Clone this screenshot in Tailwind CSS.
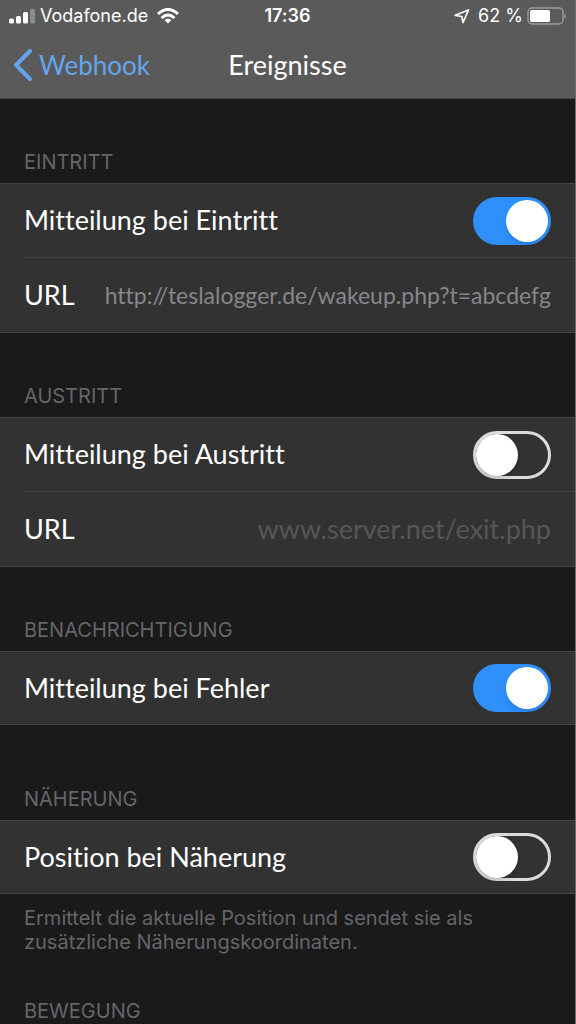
<!DOCTYPE html>
<html lang="de">
<head>
<meta charset="utf-8">
<meta name="viewport" content="width=device-width, initial-scale=1">
<title>Ereignisse</title>
<script src="https://cdn.jsdelivr.net/npm/@tailwindcss/browser@4"></script>
</head>
<body class="bg-[#1a1a1a] font-['Lato',sans-serif] text-white [font-variant-ligatures:none]">
<div class="flex h-screen flex-col overflow-hidden border-r border-[#6a6a6a]">
  <header class="shrink-0 border-b border-[#4a4a4a] bg-[#5a5a5a]">
    <div class="grid h-8 grid-cols-[1fr_auto_1fr] items-center px-2 font-['Inter',sans-serif] text-lg">
      <div class="flex items-center gap-2">
        <svg class="h-4 w-7" viewBox="0 0 28 16" fill="#fff" aria-hidden="true"><rect x="1" y="10.500" width="5" height="5" rx="1.500"/><rect x="8" y="8" width="5" height="7.500" rx="1.500"/><rect x="15" y="4" width="5" height="11.500" rx="1.500"/><rect x="22" y="1" width="5" height="14.500" rx="1.500" opacity=".3"/></svg>
        <span class="-ml-1">Vodafone.de</span>
        <svg class="h-4 w-6" viewBox="0 0 24 16" fill="none" stroke="#fff" stroke-width="3" aria-hidden="true"><path d="M2 6Q12-3 22 6"/><path d="M5.500 10Q12 4 18.500 10"/><path d="M12 15.500 8.500 12Q12 9 15.500 12Z" fill="#fff" stroke="none"/></svg>
      </div>
      <time class="font-semibold">17:36</time>
      <div class="flex items-center justify-end gap-1">
        <svg class="mr-1 h-4 w-4" viewBox="0 0 16 16" fill="none" stroke="#fff" stroke-width="1.700" stroke-linejoin="round" aria-hidden="true"><path d="M1.200 7.300 14.500 2 9 14.500 7.800 8.500Z"/></svg>
        <span>62 %</span>
        <svg class="h-[18px] w-10" viewBox="0 0 40 18" aria-hidden="true"><rect x="1" y="1" width="35" height="16" rx="4" fill="none" stroke="#999" stroke-width="1.500"/><rect x="3" y="3" width="20" height="12" rx="1.500" fill="#fff"/><path d="M37.500 6q3 3 0 6Z" fill="#999"/></svg>
      </div>
    </div>
    <div class="grid h-[66px] grid-cols-[1fr_auto_1fr] items-center px-3">
      <a href="#" class="flex items-center gap-[3px] text-[26px] text-[#63a6ee]">
        <svg class="h-9 w-6" viewBox="0 0 24 36" fill="none" stroke="currentColor" stroke-width="4" stroke-linecap="round" stroke-linejoin="round" aria-hidden="true"><path d="M18 4 4 18 18 32"/></svg>
        Webhook</a>
      <h1 class="text-[27px]">Ereignisse</h1>
    </div>
  </header>
  <main class="flex-1 overflow-hidden">
    <section class="pt-12">
      <h2 class="px-6 pb-[6px] font-['Inter',sans-serif] text-xl leading-[30px] text-[#65656a]">EINTRITT</h2>
      <div class="border-y border-[#444] bg-[#323232] pl-6">
        <label class="flex h-[74px] items-center justify-between border-b border-[#444] pr-6 text-[27px]">Mitteilung bei Eintritt
          <input type="checkbox" role="switch" checked class="h-12 w-[78px] appearance-none rounded-full bg-[#2f90fb] p-[3px] before:block before:size-[42px] before:rounded-full before:bg-white before:shadow-md checked:before:ml-[30px]"></label>
        <label class="flex h-[74px] items-center gap-6 pr-6 text-[27px]">URL
          <input type="url" value="http://teslalogger.de/wakeup.php?t=abcdefg" class="min-w-0 flex-1 bg-transparent text-right text-[23px] text-[#86868b] outline-none"></label>
      </div>
    </section>
    <section class="pt-12">
      <h2 class="px-6 pb-[6px] font-['Inter',sans-serif] text-xl leading-[30px] text-[#65656a]">AUSTRITT</h2>
      <div class="border-y border-[#444] bg-[#323232] pl-6">
        <label class="flex h-[74px] items-center justify-between border-b border-[#444] pr-6 text-[27px]">Mitteilung bei Austritt
          <input type="checkbox" role="switch" class="h-12 w-[78px] appearance-none rounded-full border-3 border-[#dcdcdc] before:block before:size-[42px] before:rounded-full before:bg-white before:shadow-md"></label>
        <label class="flex h-[74px] items-center gap-6 pr-6 text-[27px]">URL
          <input type="url" placeholder="www.server.net/exit.php" class="min-w-0 flex-1 bg-transparent text-right text-[27px] outline-none placeholder:text-[#565658]"></label>
      </div>
    </section>
    <section class="pt-12">
      <h2 class="px-6 pb-[6px] font-['Inter',sans-serif] text-xl leading-[30px] text-[#65656a]">BENACHRICHTIGUNG</h2>
      <div class="border-y border-[#444] bg-[#323232] pl-6">
        <label class="flex h-[72px] items-center justify-between pr-6 text-[27px]">Mitteilung bei Fehler
          <input type="checkbox" role="switch" checked class="h-12 w-[78px] appearance-none rounded-full bg-[#2f90fb] p-[3px] before:block before:size-[42px] before:rounded-full before:bg-white before:shadow-md checked:before:ml-[30px]"></label>
      </div>
    </section>
    <section class="pt-[59px]">
      <h2 class="px-6 pb-[6px] font-['Inter',sans-serif] text-xl leading-[30px] text-[#65656a]">NÄHERUNG</h2>
      <div class="border-y border-[#444] bg-[#323232] pl-6">
        <label class="flex h-[72px] items-center justify-between pr-6 text-[27px]">Position bei Näherung
          <input type="checkbox" role="switch" class="h-12 w-[78px] appearance-none rounded-full border-3 border-[#dcdcdc] before:block before:size-[42px] before:rounded-full before:bg-white before:shadow-md"></label>
      </div>
      <p class="max-w-[520px] px-6 pt-3 font-['Inter',sans-serif] text-xl leading-6 text-[#65656a]">Ermittelt die aktuelle Position und sendet sie als zusätzliche Näherungskoordinaten.</p>
    </section>
    <section class="pt-[42px]">
      <h2 class="px-6 pb-[6px] font-['Inter',sans-serif] text-xl leading-[30px] text-[#65656a]">BEWEGUNG</h2>
    </section>
  </main>
</div>
</body>
</html>
